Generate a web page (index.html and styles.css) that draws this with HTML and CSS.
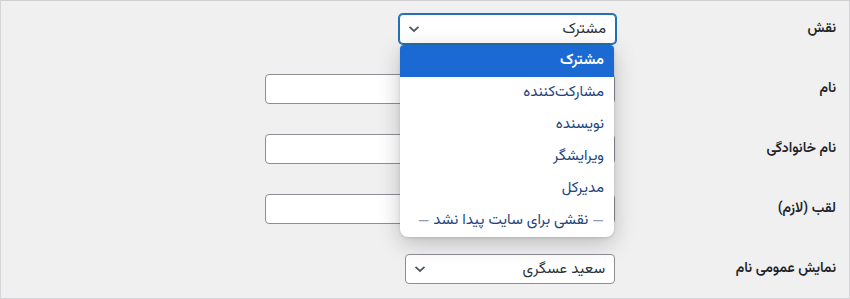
FILE: index.html
```html
<!DOCTYPE html>
<html lang="fa" dir="rtl">
<head>
<meta charset="utf-8">
<link rel="stylesheet" href="styles.css">
</head>
<body>
<div class="frame">
  <div class="row">
    <div class="label">نقش</div>
    <div class="field">
      <div class="select select-role is-focus">
        <span class="select-value">مشترک</span>
        <svg class="chev" width="12" height="8" viewBox="0 0 12 8"><path d="M1.5 1.8 L6 6 L10.5 1.8" fill="none" stroke="#50575e" stroke-width="1.8"/></svg>
      </div>
      <ul class="menu">
        <li class="opt is-active">مشترک</li>
        <li class="opt">مشارکت‌کننده</li>
        <li class="opt">نویسنده</li>
        <li class="opt">ویرایشگر</li>
        <li class="opt">مدیرکل</li>
        <li class="opt"><span class="dash">—</span> نقشی برای سایت پیدا نشد <span class="dash">—</span></li>
      </ul>
    </div>
  </div>
  <div class="row">
    <div class="label">نام</div>
    <div class="field"><div class="input"></div></div>
  </div>
  <div class="row">
    <div class="label">نام خانوادگی</div>
    <div class="field"><div class="input"></div></div>
  </div>
  <div class="row">
    <div class="label">لقب (لازم)</div>
    <div class="field"><div class="input"></div></div>
  </div>
  <div class="row">
    <div class="label">نمایش عمومی نام</div>
    <div class="field">
      <div class="select select-display">
        <span class="select-value">سعید عسگری</span>
        <svg class="chev" width="12" height="8" viewBox="0 0 12 8"><path d="M1.5 1.8 L6 6 L10.5 1.8" fill="none" stroke="#50575e" stroke-width="1.8"/></svg>
      </div>
    </div>
  </div>
</div>
</body>
</html>
```
FILE: styles.css
```css
* { box-sizing: border-box; }
html, body { margin: 0; padding: 0; }
body {
  width: 850px;
  height: 299px;
  background: #f0f0f1;
  font-family: "Vazirmatn", "Noto Sans Arabic", "DejaVu Sans", sans-serif;
  color: #1d2327;
  overflow: hidden;
}
.frame {
  width: 850px;
  height: 299px;
  border: 1px solid #d5d5d8;
  border-top-color: #d0d0d3;
  background: #f0f0f1;
  padding-right: 13px;
}
.row {
  display: grid;
  grid-template-columns: 221px 1fr;
  height: 60px;
  padding-top: 13px;
}
.label {
  height: 30px;
  display: flex;
  align-items: center;
  font-size: 14px;
  font-weight: 600;
  color: #1d2327;
}
.field {
  position: relative;
  height: 30px;
}
.input {
  width: 350px;
  height: 30px;
  background: #fff;
  border: 1px solid #8c8f94;
  border-radius: 4px;
}
.select {
  height: 30px;
  background: #fff;
  border: 1px solid #8c8f94;
  border-radius: 4px;
  display: flex;
  align-items: center;
  justify-content: space-between;
  padding: 0 9px 0 8px;
  font-size: 15px;
  color: #2c3338;
}
.select-role { width: 217px; margin-right: -1px; }
.select-role.is-focus {
  border-color: #2271b1;
  box-shadow: 0 0 0 1px #2271b1;
}
.select-display { width: 210px; }
.chev { display: block; }
.menu {
  position: absolute;
  top: 31px;
  right: 1px;
  width: 214px;
  margin: 0;
  padding: 0;
  list-style: none;
  background: #fff;
  border-radius: 4px 4px 8px 8px;
  box-shadow: 0 6px 22px rgba(0, 0, 0, 0.22), 0 1px 3px rgba(0, 0, 0, 0.12);
  overflow: hidden;
  z-index: 2;
}
.opt {
  display: block;
  height: 32px;
  line-height: 32px;
  padding-right: 10px;
  font-size: 15px;
  color: #22447c;
  white-space: nowrap;
}
.opt.is-active {
  background: #1b69d3;
  color: #fff;
  font-weight: 600;
}
.dash { color: #8a9bb3; }
```
